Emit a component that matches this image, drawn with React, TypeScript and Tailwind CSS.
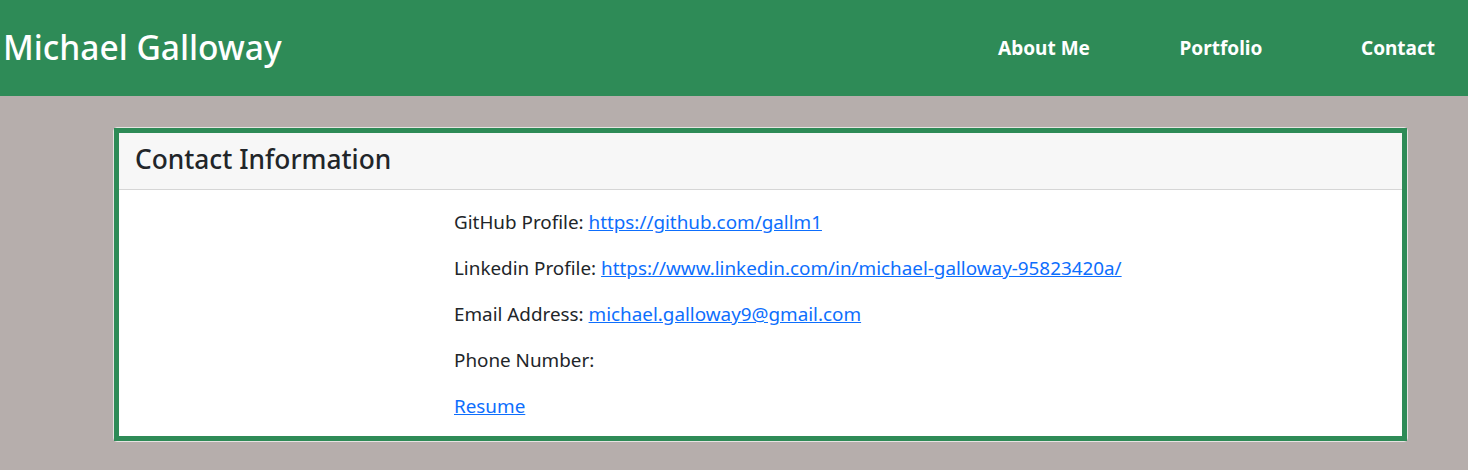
import React from 'react'

const font = { fontFamily: '"Noto Sans", "Open Sans", Arial, sans-serif' }

function Header() {
    return (
        <header className="h-[96px] bg-[#2e8b57] flex items-center justify-between text-white">
            <h1 className="pl-[3px] text-[33.5px] leading-none font-medium">Michael Galloway</h1>
            <nav className="flex gap-[37px] self-stretch items-center">
                <a className="w-[140px] text-center text-[19px] font-bold">About Me</a>
                <a className="w-[140px] text-center text-[19px] font-bold">Portfolio</a>
                <a className="w-[140px] text-center text-[19px] font-bold">Contact</a>
            </nav>
        </header>
    )
}

function Row({ label, last, children }: { label?: string; last?: boolean; children?: React.ReactNode }) {
    return (
        <p className={last ? "mb-[16px] leading-[28px] text-[18.85px] text-[#212529]" : "mb-[18px] leading-[28px] text-[18.85px] text-[#212529]"}>
            {label && <span>{label} </span>}
            {children}
        </p>
    )
}

function Link({ children }: { children: React.ReactNode }) {
    return <a href="#" className="text-[#0d6efd] underline">{children}</a>
}

export default function App() {
    return (
        <div style={font} className="min-h-[470px] bg-[#b6aeac]">
            <Header />
            <div className="pt-[31px] pl-[113px] pr-[60px]">
                <div className="border border-[#e6e3e2] rounded-[4px]">
                    <div className="border-[5px] border-[#2e8b57] bg-white">
                        <div className="h-[57px] bg-[#f7f7f7] border-b border-[#d6d6d6] flex items-center pl-[16px] pb-[3px]">
                            <h2 className="text-[26.3px] font-medium text-[#212529]">Contact Information</h2>
                        </div>
                        <div className="pl-[335px] pt-[18px]">
                            <Row label="GitHub Profile:"><Link>https://github.com/gallm1</Link></Row>
                            <Row label="Linkedin Profile:"><Link>https://www.linkedin.com/in/michael-galloway-95823420a/</Link></Row>
                            <Row label="Email Address:"><Link>michael.galloway9@gmail.com</Link></Row>
                            <Row label="Phone Number:" />
                            <Row last><Link>Resume</Link></Row>
                        </div>
                    </div>
                </div>
            </div>
        </div>
    )
}
